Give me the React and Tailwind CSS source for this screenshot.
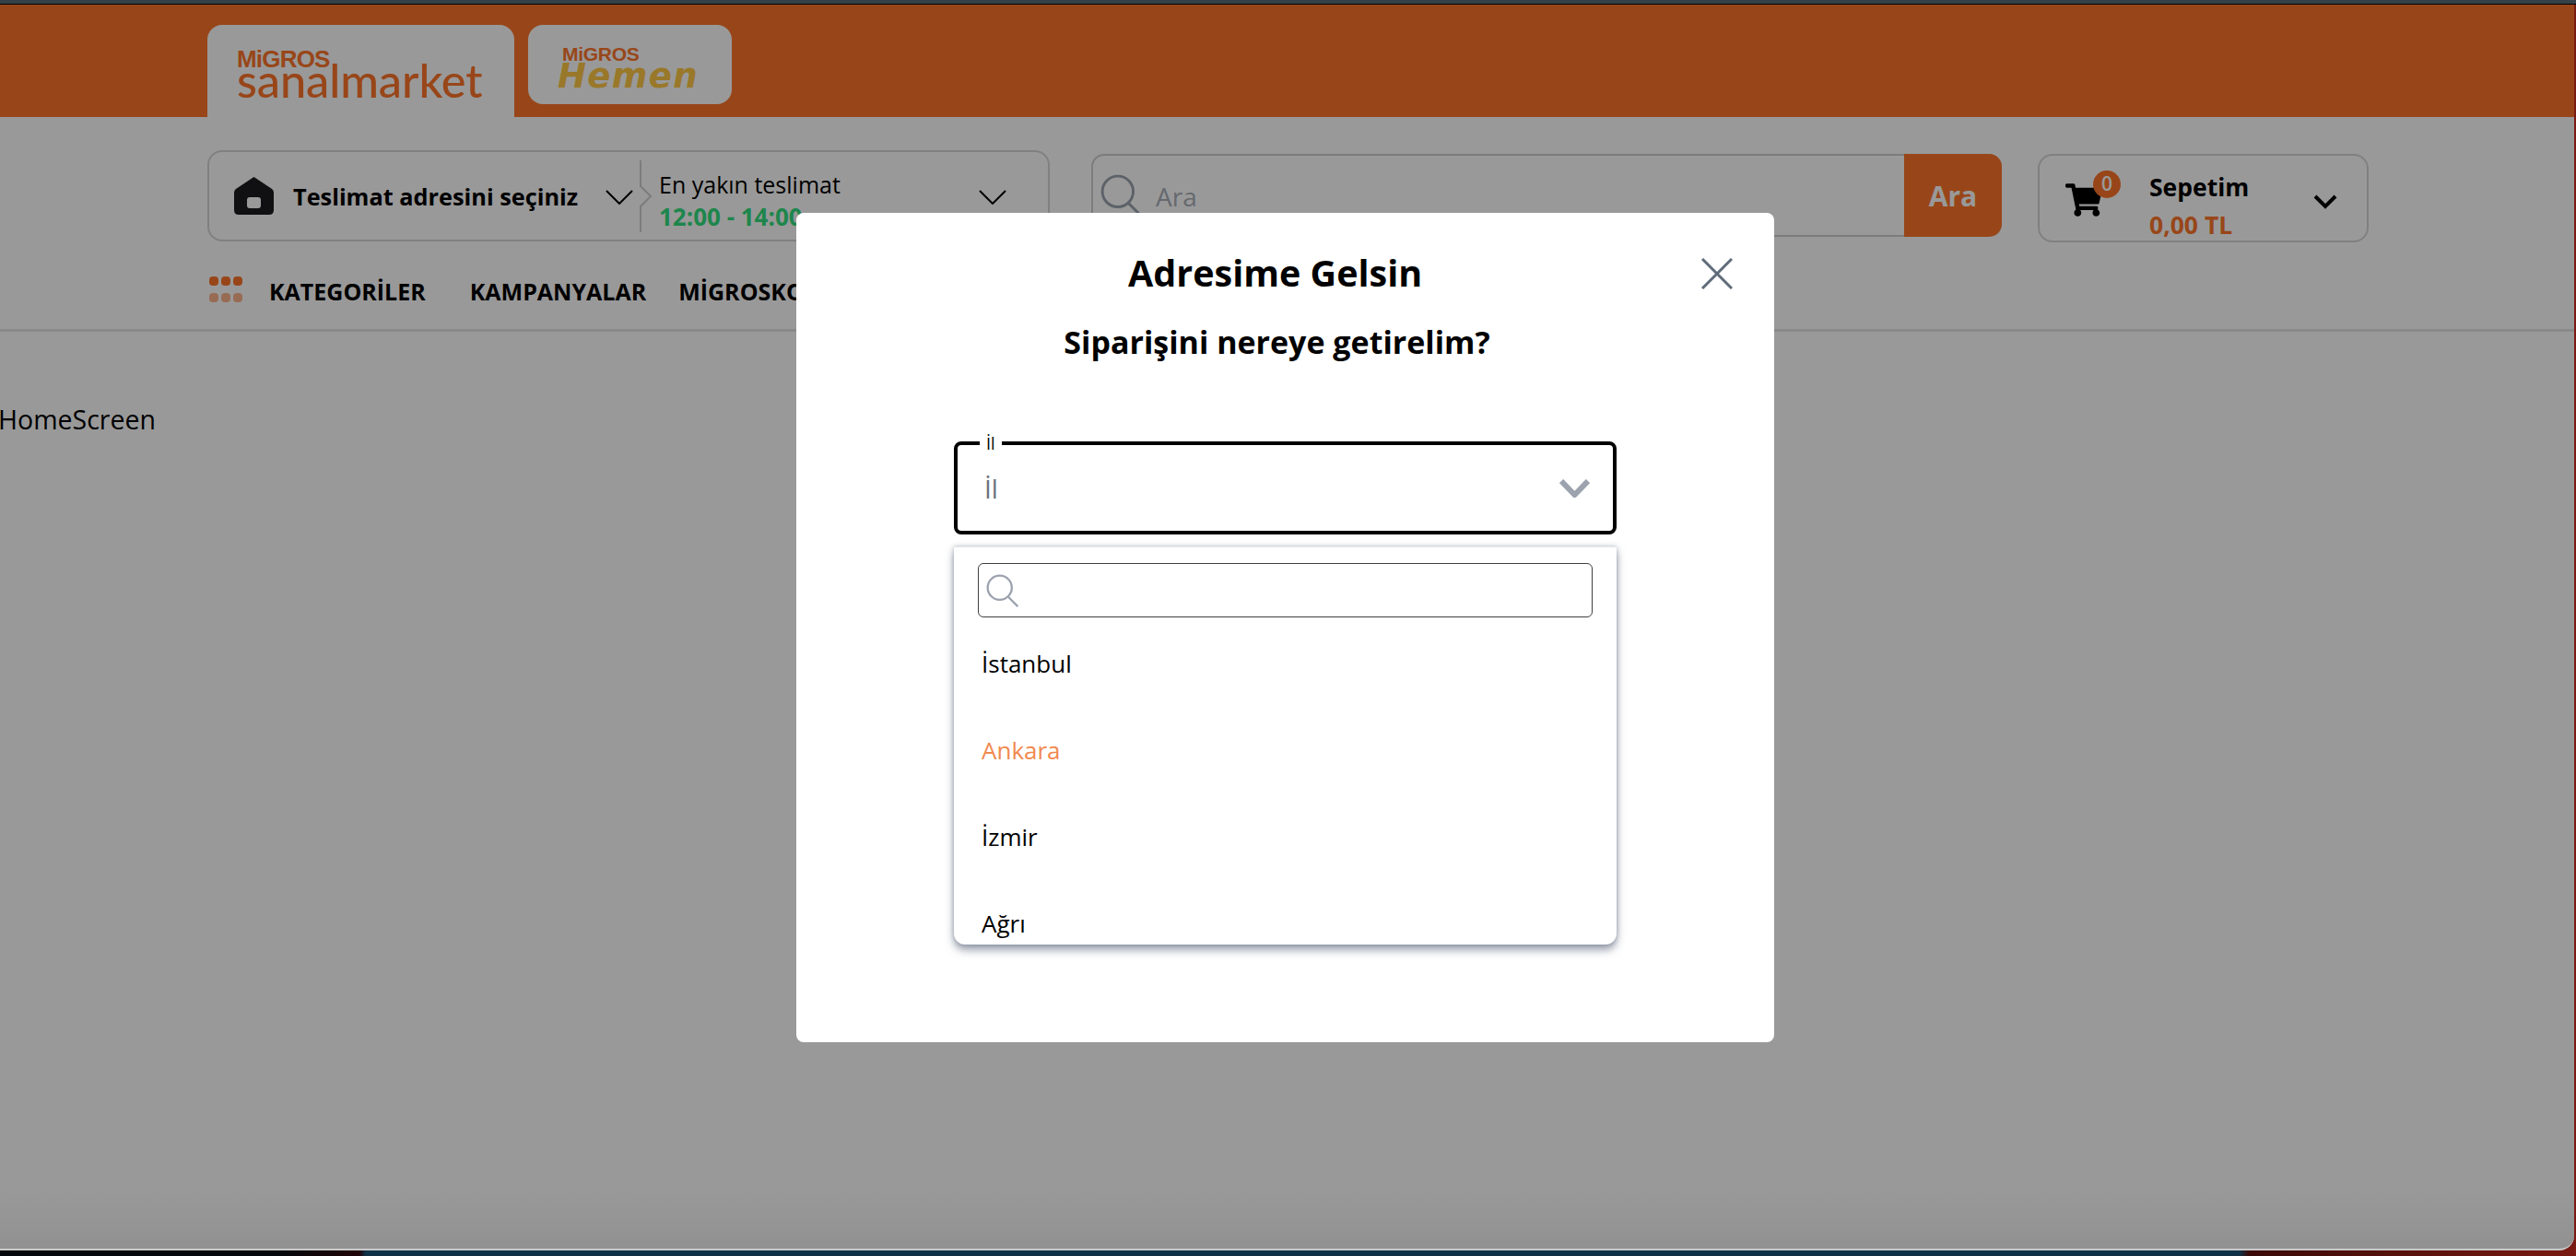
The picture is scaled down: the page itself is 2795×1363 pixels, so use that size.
import { FaShoppingCart } from 'react-icons/fa';

const cities = ['İstanbul', 'Ankara', 'İzmir', 'Ağrı', 'Adana'];

const ThinChevron = ({ className }) => (
    <svg viewBox="0 0 30 16" fill="none" className={className}>
        <path d="M1 1 L15 15 L29 1" stroke="currentColor" strokeWidth="2" />
    </svg>
);

const SearchGlyph = ({ className }) => (
    <svg viewBox="0 0 44 44" fill="none" className={className}>
        <circle cx="18" cy="18" r="16" stroke="currentColor" strokeWidth="2.8" />
        <path d="M29 30 L42 43" stroke="currentColor" strokeWidth="2.8" />
    </svg>
);

const Header = () => (
    <div className="flex h-[122px] items-start gap-[15px] bg-[#fd752b] pl-[225px] pt-[22px]">
        <div className="flex h-[100px] w-[333px] flex-col rounded-t-[16px] bg-white pl-[32px] pt-[27px] text-[#fd752b]">
            <span className="font-['Liberation_Sans'] text-[26px] leading-[20px] font-bold tracking-[-0.8px]">MiGROS</span>
            <span className="mt-[2px] font-['Lato'] text-[50.5px] leading-[22px] font-medium tracking-[-0.1px]">sanalmarket</span>
        </div>
        <div className="flex h-[86px] w-[221px] flex-col rounded-[16px] bg-white pl-[32px] pt-[23px]">
            <span className="h-[15px] pl-[5px] font-['Liberation_Sans'] text-[21px] leading-[18px] font-bold tracking-[-0.3px] text-[#fd752b]">MiGROS</span>
            <span className="font-['DejaVu_Sans'] text-[37px] leading-[36px] font-bold tracking-[1.4px] text-[#ffc845] italic">Hemen</span>
        </div>
    </div>
);

const AddressBox = () => (
    <div className="flex h-[99px] w-[914px] items-center rounded-[16px] border-2 border-[#d6d6d6] pl-[27px]">
        <svg viewBox="0 0 43 41" className="h-[41px] w-[43px] shrink-0">
            <path d="M21.5 0 L41 13 Q43 14.5 43 17 V36 Q43 41 38 41 H5 Q0 41 0 36 V17 Q0 14.5 2 13 Z" fill="#1c1c1e" />
            <rect x="14" y="22" width="15" height="12" rx="3" fill="#ffffff" />
        </svg>
        <span className="ml-[21px] w-[339px] text-[25.3px] leading-[34px] font-bold text-black">Teslimat adresini seçiniz</span>
        <ThinChevron className="mt-[2px] h-[16px] w-[30px] shrink-0 text-black" />
        <svg viewBox="0 0 14 78" fill="none" className="ml-[7px] h-[78px] w-[14px] shrink-0">
            <path d="M1 0 V28 L12 39 L1 50 V78" stroke="#cfcfcf" strokeWidth="2" />
        </svg>
        <div className="ml-[7px] flex w-[347px] flex-col pt-[10px]">
            <span className="text-[25px] leading-[34px] text-black">En yakın teslimat</span>
            <span className="text-[26px] leading-[36px] font-bold text-[#32e07f]">12:00 - 14:00</span>
        </div>
        <ThinChevron className="mt-[2px] h-[16px] w-[30px] shrink-0 text-black" />
    </div>
);

const SearchBox = () => (
    <div className="mt-[4px] ml-[45px] flex h-[90px] w-[988px] items-stretch rounded-[14px] border-2 border-[#cfcfcf]">
        <div className="flex flex-1 items-center pl-[8px]">
            <SearchGlyph className="h-[46px] w-[46px] text-[#9ca3af]" />
            <span className="ml-[14px] pt-[2px] text-[28px] text-[#a9afb8]">Ara</span>
        </div>
        <div className="-my-[2px] -mr-[2px] flex w-[106px] items-center justify-center rounded-r-[14px] bg-[#fd752b] text-[30px] font-bold text-white">Ara</div>
    </div>
);

const CartBox = () => (
    <div className="relative mt-[4px] ml-[39px] flex h-[96px] w-[359px] items-center rounded-[16px] border-2 border-[#d6d6d6] pl-[28px]">
        <FaShoppingCart className="mt-[4px] h-[36px] w-[40px] shrink-0 text-black" />
        <span className="absolute top-[16px] left-[58px] flex h-[30px] w-[30px] items-center justify-center rounded-full bg-[#fd752b] text-[21px] font-semibold text-white">0</span>
        <div className="mt-[18px] ml-[51px] flex flex-col">
            <span className="text-[26.5px] leading-[41px] font-bold text-black">Sepetim</span>
            <span className="text-[26.5px] leading-[41px] font-bold text-[#fd752b]">0,00 TL</span>
        </div>
        <svg viewBox="0 0 26 16" fill="none" className="mt-[8px] ml-[69px] h-[16px] w-[28px]">
            <path d="M2 2 L13 13 L24 2" stroke="#000000" strokeWidth="4" />
        </svg>
    </div>
);

const NavBar = () => (
    <div className="flex h-[94px] items-start pl-[227px] pt-[36px]">
        <div className="mt-[1px] grid h-[28px] w-[36px] grid-cols-3 gap-x-[3px] gap-y-[8px]">
            {[0, 1, 2].map((i) => <span key={i} className="h-[10px] rounded-[4px] bg-[#fd752b]" />)}
            {[3, 4, 5].map((i) => <span key={i} className="h-[10px] rounded-[4px] bg-[#fdb48c]" />)}
        </div>
        <span className="ml-[29px] text-[25px] leading-[34px] font-bold text-black">KATEGORİLER</span>
        <span className="ml-[48px] text-[25px] leading-[34px] font-bold text-black">KAMPANYALAR</span>
        <span className="ml-[35px] text-[25px] leading-[34px] font-bold text-black">MİGROSKOP</span>
    </div>
);

const CityModal = () => (
    <div className="mt-[2px] mr-[4px] flex h-[900px] w-[1061px] flex-col rounded-[8px] bg-white">
        <div className="flex items-center justify-between pt-[40px] pr-[45px] pl-[360px]">
            <h2 className="text-[39.5px] leading-[50px] font-bold text-black">Adresime Gelsin</h2>
            <svg viewBox="0 0 34 34" fill="none" className="mt-[2px] h-[34px] w-[34px] text-[#5f6b7a]">
                <path d="M1 1 L33 33 M33 1 L1 33" stroke="currentColor" strokeWidth="3" />
            </svg>
        </div>
        <p className="mt-[28px] pr-[18px] text-center text-[34px] leading-[44px] font-bold text-black">Siparişini nereye getirelim?</p>

        <div className="relative mx-[171px] mt-[86px] flex h-[101px] items-center justify-between rounded-[8px] border-4 border-black pr-[25px] pl-[29px]">
            <span className="absolute -top-[12px] left-[24px] bg-white px-[7px] text-[18px] leading-[20px] text-black">İl</span>
            <span className="text-[28px] leading-[36px] font-medium text-[#6b7280]">İl</span>
            <svg viewBox="0 0 33 20" fill="none" className="h-[20px] w-[33px] text-[#9ca3af]">
                <path d="M2 2 L16.5 17 L31 2" stroke="currentColor" strokeWidth="6" />
            </svg>
        </div>

        <div className="mx-[171px] mt-[13px] flex h-[432px] flex-col overflow-hidden rounded-b-[12px] border-t border-[#e5e7eb] bg-white shadow-[0_6px_10px_rgba(75,85,110,0.55),0_0_5px_rgba(75,85,110,0.35)]">
            <div className="mx-[26px] mt-[17px] flex h-[59px] shrink-0 items-center rounded-[6px] border border-[#3f3f3f] pl-[8px]">
                <SearchGlyph className="h-[36px] w-[36px] text-[#9ca3af]" />
            </div>
            <div className="mt-[3px] flex flex-col px-[30px]">
                {cities.map((city) => (
                    <div
                        key={city}
                        className={`flex h-[94px] shrink-0 items-center text-[26px] ${city === 'Ankara' ? 'text-[#f2894f]' : 'text-black'}`}
                    >
                        {city}
                    </div>
                ))}
            </div>
        </div>
    </div>
);

const App = () => {
    return (
        <div className="flex h-[1363px] w-[2795px] flex-col overflow-hidden bg-[linear-gradient(90deg,#04080c_0,#04080c_300px,#200408_390px,#0e3148_397px,#0e3148_2430px,#3a0a08_2440px,#7a1a12_2795px)] pb-[6px] font-['Open_Sans',sans-serif]">
            <div className="h-[5px] shrink-0 border-b border-black bg-[#36424a]" />
            <div className="relative mr-[2px] flex flex-1 flex-col overflow-hidden rounded-br-[16px] border-b-2 border-[#c9c9c9] bg-white">
                <Header />
                <div className="flex items-start pt-[36px] pl-[225px]">
                    <AddressBox />
                    <SearchBox />
                    <CartBox />
                </div>
                <NavBar />
                <div className="h-[3px] bg-[#e5e5e5]" />
                <div className="mt-[75px] -ml-[2px] text-[28.5px] leading-[40px] text-black">HomeScreen</div>

                {/* dim + modal */}
                <div className="absolute inset-0 flex items-center justify-center bg-black/40 bg-[linear-gradient(180deg,transparent_95%,rgba(0,0,0,0.05)_100%)]">
                    <CityModal />
                </div>
            </div>
        </div>
    );
};

export default App;
